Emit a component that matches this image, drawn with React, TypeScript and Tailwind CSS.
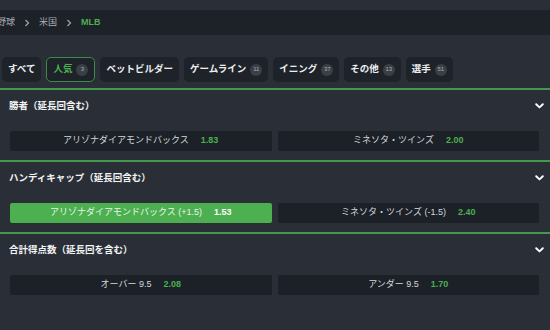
import React from "react";

const tabs: { label: string; badge?: string; active?: boolean }[] = [
  { label: "すべて" },
  { label: "人気", badge: "3", active: true },
  { label: "ベットビルダー" },
  { label: "ゲームライン", badge: "11" },
  { label: "イニング", badge: "37" },
  { label: "その他", badge: "13" },
  { label: "選手", badge: "51" },
];

type Opt = { label: string; odds: string; selected?: boolean };

const sections: { title: string; opts: [Opt, Opt] }[] = [
  {
    title: "勝者（延長回含む）",
    opts: [
      { label: "アリゾナダイアモンドバックス", odds: "1.83" },
      { label: "ミネソタ・ツインズ", odds: "2.00" },
    ],
  },
  {
    title: "ハンディキャップ（延長回含む）",
    opts: [
      { label: "アリゾナダイアモンドバックス (+1.5)", odds: "1.53", selected: true },
      { label: "ミネソタ・ツインズ (-1.5)", odds: "2.40" },
    ],
  },
  {
    title: "合計得点数（延長回を含む）",
    opts: [
      { label: "オーバー 9.5", odds: "2.08" },
      { label: "アンダー 9.5", odds: "1.70" },
    ],
  },
];

function Chevron() {
  return (
    <svg width="9" height="6" viewBox="0 0 9 6" className="block">
      <path d="M1.2 1.2 L4.5 4.4 L7.8 1.2" fill="none" stroke="#ffffff" strokeWidth="1.9" strokeLinecap="round" strokeLinejoin="round" />
    </svg>
  );
}

function Crumb() {
  return (
    <svg width="6" height="8" viewBox="0 0 6 8" className="block">
      <path d="M1.5 1 L4.5 4 L1.5 7" fill="none" stroke="#9aa0a8" strokeWidth="1.3" />
    </svg>
  );
}

export default function App() {
  return (
    <div
      className="w-[550px] h-[330px] overflow-hidden bg-[#2a2f37] text-[#e4e6e8]"
      style={{ fontFamily: '"Liberation Sans", "Noto Sans CJK JP", sans-serif' }}
    >
      <div className="h-[10px]" />
      <div className="h-[25px] bg-[#1d2128] flex items-center gap-[9px] text-[9px] text-[#a9aeb5]">
        <span className="-ml-[3px]">野球</span>
        <Crumb />
        <span>米国</span>
        <Crumb />
        <span className="text-[#4caf50] font-bold">MLB</span>
      </div>
      <div className="h-[22px]" />
      <div className="flex items-center gap-[5px] pl-[2px] h-[25px]">
        {tabs.map((t) => (
          <div
            key={t.label}
            className={
              "h-[25px] rounded-[5px] flex items-center gap-[4px] px-[6px] text-[9.5px] font-bold " +
              (t.active
                ? "bg-[#1e2229] border border-[#3d8a47] text-[#4caf50]"
                : "bg-[#1e2229] text-[#eceef0]")
            }
          >
            <span>{t.label}</span>
            {t.badge && (
              <span className="w-[12px] h-[12px] rounded-full bg-[#3a3f47] text-[#a8adb4] text-[6px] flex items-center justify-center font-normal">
                {t.badge}
              </span>
            )}
          </div>
        ))}
      </div>
      <div className="h-[6px]" />
      {sections.map((s) => (
        <div key={s.title}>
          <div className="h-[2px] bg-[#43984b]" />
          <div className="h-[32px] flex items-center justify-between pl-[9px] pr-[6px]">
            <span className="text-[9.5px] font-bold text-[#f2f3f4]">{s.title}</span>
            <Chevron />
          </div>
          <div className="mt-[9px] pl-[10px] pr-[11px] flex gap-[6px] pb-[9px]">
            {s.opts.map((o) => (
              <div
                key={o.label}
                className={
                  "flex-1 h-[20px] rounded-[2px] flex items-center justify-center gap-[12px] text-[9px] " +
                  (o.selected ? "bg-[#4caf50] text-[#e9f6ea]" : "bg-[#1c2027] text-[#d4d7db]")
                }
              >
                <span>{o.label}</span>
                <span className={"font-bold " + (o.selected ? "text-[#ffffff]" : "text-[#4caf50]")}>{o.odds}</span>
              </div>
            ))}
          </div>
        </div>
      ))}
    </div>
  );
}
